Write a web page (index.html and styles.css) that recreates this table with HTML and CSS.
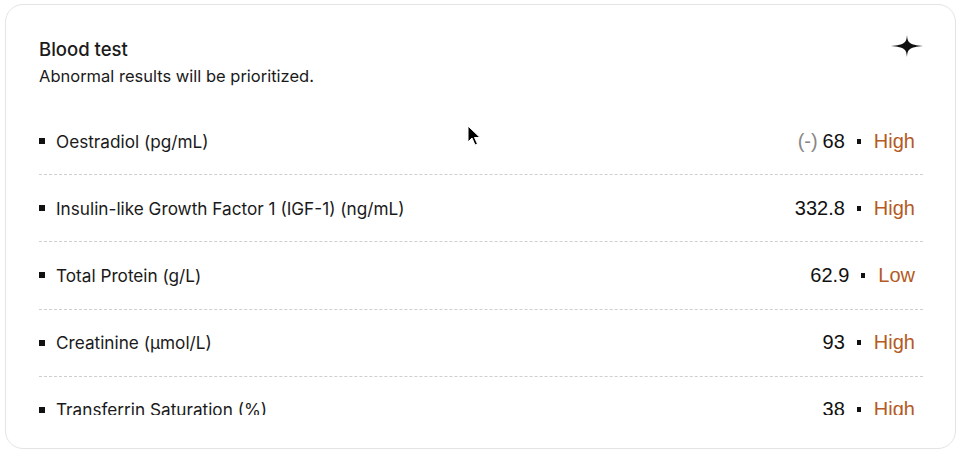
FILE: index.html
```html
<!DOCTYPE html>
<html>
<head>
<meta charset="utf-8">
<link rel="stylesheet" href="styles.css">
</head>
<body>
<div class="card">
  <div class="header">
    <div class="titles">
      <div class="title">Blood test</div>
      <div class="subtitle">Abnormal results will be prioritized.</div>
    </div>
    <svg class="sparkle" width="32" height="22" viewBox="0 0 32 22"><path d="M16 0 C16.6 7.5 18 9.8 32 11 C18 12.2 16.6 14.5 16 22 C15.4 14.5 14 12.2 0 11 C14 9.8 15.4 7.5 16 0 Z" fill="#111"/></svg>
  </div>
  <div class="list">
    <div class="row"><div class="label"><span class="sq"></span>Oestradiol (pg/mL)</div><div class="value"><span class="minus">(-)</span> 68<span class="dot"></span><span class="status">High</span></div></div>
    <div class="row"><div class="label"><span class="sq"></span>Insulin-like Growth Factor 1 (IGF-1) (ng/mL)</div><div class="value">332.8<span class="dot"></span><span class="status">High</span></div></div>
    <div class="row"><div class="label"><span class="sq"></span>Total Protein (g/L)</div><div class="value">62.9<span class="dot"></span><span class="status">Low</span></div></div>
    <div class="row"><div class="label"><span class="sq"></span>Creatinine (µmol/L)</div><div class="value">93<span class="dot"></span><span class="status">High</span></div></div>
    <div class="row"><div class="label"><span class="sq"></span>Transferrin Saturation (%)</div><div class="value">38<span class="dot"></span><span class="status">High</span></div></div>
    <div class="row"><div class="label"><span class="sq"></span>Ferritin (µg/L)</div><div class="value">310<span class="dot"></span><span class="status">High</span></div></div>
  </div>
  <svg class="cursor" width="14" height="22" viewBox="0 0 14 22"><path d="M1 1 L1 17 L5 13 L8 20 L10.5 19 L7.5 12.5 L13 12.5 Z" fill="#000" stroke="#fff" stroke-width="1"/></svg>
</div>
</body>
</html>
```
FILE: styles.css
```css
html, body {
  margin: 0;
  padding: 0;
  background: #fff;
}
body {
  width: 960px;
  height: 455px;
  overflow: hidden;
}
.card {
  position: relative;
  box-sizing: border-box;
  margin: 4px 0 0 5px;
  width: 951px;
  height: 445px;
  border: 1px solid #e4e4e4;
  border-radius: 18px;
  padding: 32px 32px 33px 33px;
  display: flex;
  flex-direction: column;
  font-family: "Inter", "Liberation Sans", sans-serif;
  color: #1a1a1a;
}
.header {
  display: flex;
  justify-content: space-between;
  align-items: flex-start;
}
.title {
  font-size: 18.5px;
  font-weight: 500;
  line-height: 24px;
}
.subtitle {
  margin-top: 5px;
  font-size: 16.5px;
  line-height: 20px;
}
.sparkle {
  margin-top: -2px;
  margin-right: 0;
}
.list {
  margin-top: 22px;
  height: 308px;
  overflow: hidden;
}
.row {
  box-sizing: border-box;
  height: 67.2px;
  border-bottom: 1px dashed #cfcfcf;
  display: flex;
  align-items: center;
  justify-content: space-between;
  padding: 0 8px 0 0;
}
.label {
  display: flex;
  align-items: center;
  font-size: 17.2px;
}
.sq {
  width: 6px;
  height: 6px;
  background: #111;
  margin: 0 11px 0 0;
}
.value {
  display: flex;
  align-items: center;
  font-family: "Liberation Sans", Arial, sans-serif;
  font-size: 20px;
  color: #111;
}
.minus {
  color: #888;
  margin-right: 5px;
}
.dot {
  width: 4px;
  height: 5px;
  background: #111;
  margin: 0 13px 0 12px;
}
.status {
  color: #b45a24;
}
.cursor {
  position: absolute;
  left: 461px;
  top: 120px;
}
```
